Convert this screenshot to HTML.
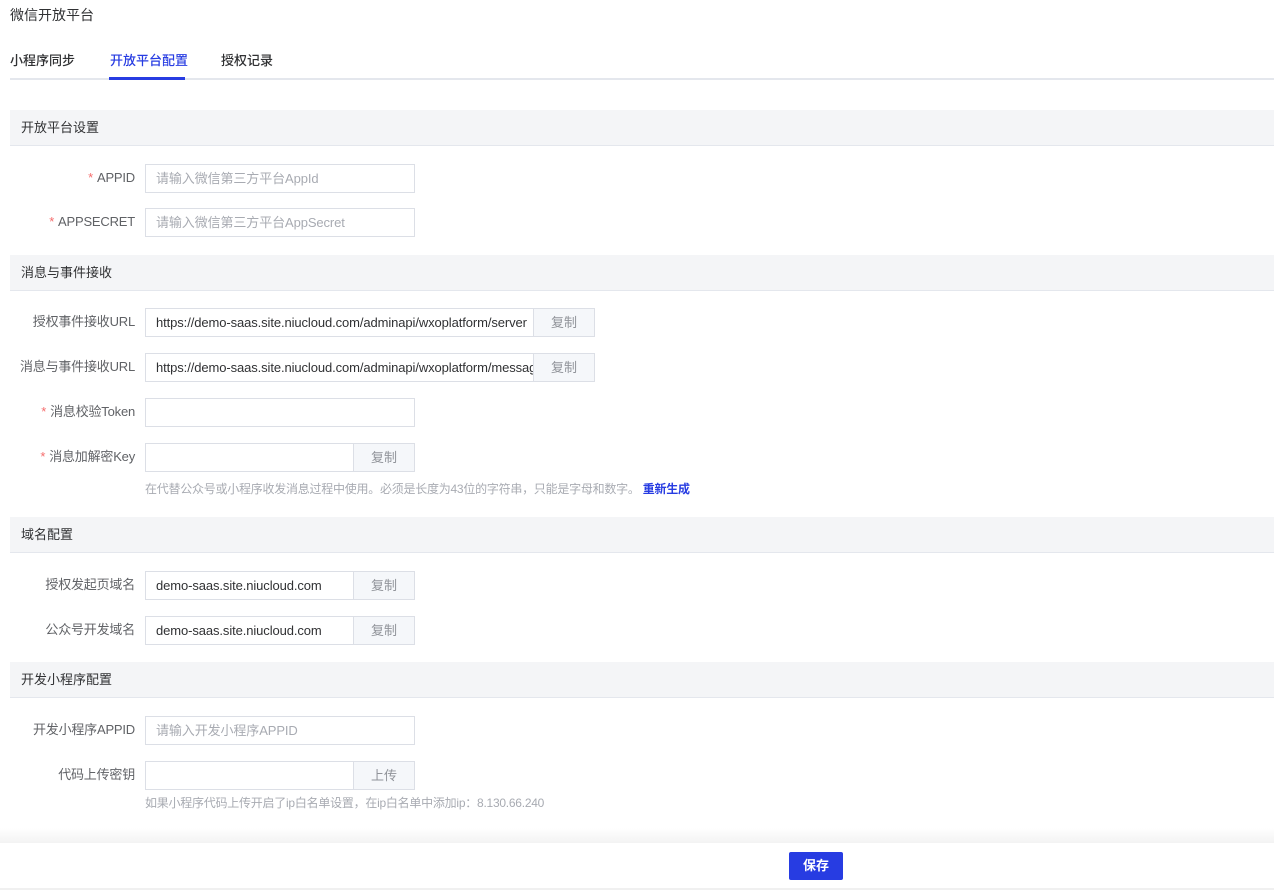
<!DOCTYPE html>
<html><head><meta charset="utf-8"><style>
*{margin:0;padding:0;box-sizing:border-box}
body{width:1274px;height:890px;background:#fff;font-family:"Liberation Sans","Noto Sans CJK SC",sans-serif;color:#333;position:relative;overflow:hidden;font-size:13px}
.a{position:absolute}
.title{left:10px;top:5px;font-size:14px;color:#303133;line-height:20px}
.tab{top:51px;font-size:13px;line-height:20px;color:#303133;font-weight:500}
.tabline{left:10px;top:78px;width:1264px;height:2px;background:#e4e7ed}
.sec{left:10px;width:1264px;height:36px;background:#f4f5f7;border-bottom:1px solid #e4e7ed;font-size:13px;line-height:35px;padding-left:11px;color:#303133}
.lab{left:0;width:135px;text-align:right;font-size:13px;line-height:20px;color:#606266;letter-spacing:-0.2px}
.lab i{color:#f56c6c;font-style:normal;margin-right:4px}
.inp{left:145px;height:29px;border:1px solid #dcdfe6;background:#fff;font-size:13px;line-height:27px;padding-left:10px;color:#303133;white-space:nowrap;overflow:hidden;letter-spacing:-0.1px}
.ph{color:#a8abb2}
.btn{height:29px;border:1px solid #dcdfe6;background:#f5f7fa;color:#909399;text-align:center;line-height:27px;font-size:13px}
.hint{left:145px;font-size:12px;color:#a8abb2;line-height:18px;letter-spacing:-0.25px}
</style></head><body>
<div class="a title">微信开放平台</div>
<div class="a tab" style="left:10px">小程序同步</div>
<div class="a tab" style="left:110px;color:#273ce2">开放平台配置</div>
<div class="a tab" style="left:221px">授权记录</div>
<div class="a tabline"></div>
<div class="a" style="left:109px;top:77px;width:76px;height:3px;background:#273ce2"></div>

<div class="a sec" style="top:110px">开放平台设置</div>
<div class="a lab" style="top:168px"><i>*</i>APPID</div>
<div class="a inp ph" style="top:164px;width:270px">请输入微信第三方平台AppId</div>
<div class="a lab" style="top:212px"><i>*</i>APPSECRET</div>
<div class="a inp ph" style="top:208px;width:270px">请输入微信第三方平台AppSecret</div>

<div class="a sec" style="top:255px">消息与事件接收</div>
<div class="a lab" style="top:312px">授权事件接收URL</div>
<div class="a inp" style="top:308px;width:389px">https://demo-saas.site.niucloud.com/adminapi/wxoplatform/server</div>
<div class="a btn" style="left:533px;top:308px;width:62px">复制</div>
<div class="a lab" style="top:357px">消息与事件接收URL</div>
<div class="a inp" style="top:353px;width:389px">https://demo-saas.site.niucloud.com/adminapi/wxoplatform/message</div>
<div class="a btn" style="left:533px;top:353px;width:62px">复制</div>
<div class="a lab" style="top:402px"><i>*</i>消息校验Token</div>
<div class="a inp" style="top:398px;width:270px"></div>
<div class="a lab" style="top:447px"><i>*</i>消息加解密Key</div>
<div class="a inp" style="top:443px;width:209px"></div>
<div class="a btn" style="left:353px;top:443px;width:62px">复制</div>
<div class="a hint" style="top:480px">在代替公众号或小程序收发消息过程中使用。必须是长度为43位的字符串，只能是字母和数字。 <span style="color:#273ce2;font-size:12px;font-weight:bold">重新生成</span></div>

<div class="a sec" style="top:517px">域名配置</div>
<div class="a lab" style="top:575px">授权发起页域名</div>
<div class="a inp" style="top:571px;width:209px">demo-saas.site.niucloud.com</div>
<div class="a btn" style="left:353px;top:571px;width:62px">复制</div>
<div class="a lab" style="top:620px">公众号开发域名</div>
<div class="a inp" style="top:616px;width:209px">demo-saas.site.niucloud.com</div>
<div class="a btn" style="left:353px;top:616px;width:62px">复制</div>

<div class="a sec" style="top:662px">开发小程序配置</div>
<div class="a lab" style="top:720px">开发小程序APPID</div>
<div class="a inp ph" style="top:716px;width:270px">请输入开发小程序APPID</div>
<div class="a lab" style="top:765px">代码上传密钥</div>
<div class="a inp" style="top:761px;width:209px"></div>
<div class="a btn" style="left:353px;top:761px;width:62px">上传</div>
<div class="a hint" style="top:794px">如果小程序代码上传开启了ip白名单设置，在ip白名单中添加ip：8.130.66.240</div>

<div class="a" style="left:0;top:828px;width:1274px;height:15px;background:linear-gradient(#fff,#f3f3f3)"></div>
<div class="a" style="left:0;top:843px;width:1274px;height:45px;background:#fff"></div>
<div class="a" style="left:0;top:888px;width:1274px;height:2px;background:#f0f0f0"></div>
<div class="a" style="left:789px;top:852px;width:54px;height:28px;background:#273ce2;border-radius:2px;color:#fff;text-align:center;line-height:28px;font-size:13px;font-weight:bold">保存</div>
</body></html>
